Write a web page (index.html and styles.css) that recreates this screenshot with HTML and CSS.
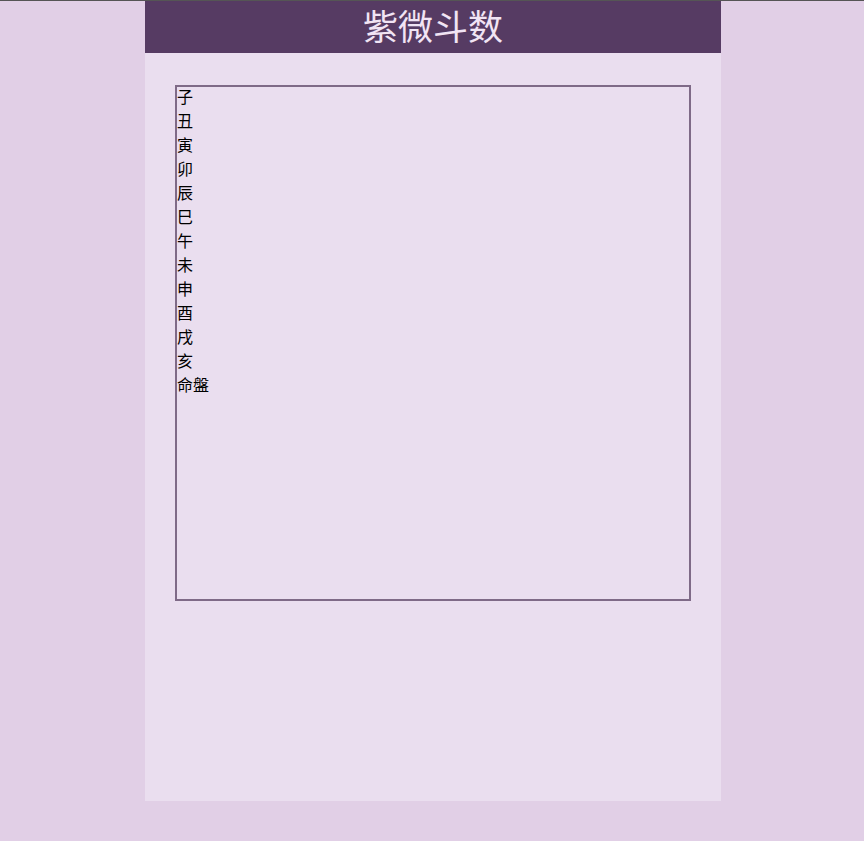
FILE: index.html
```html
<!DOCTYPE html>
<html lang="zh">
<head>
<meta charset="utf-8">
<title>紫微斗数</title>
<link rel="stylesheet" href="styles.css">
</head>
<body>
<div class="page">
  <h1 class="title">紫微斗数</h1>
  <div class="chart">
    <div class="cell">子</div>
    <div class="cell">丑</div>
    <div class="cell">寅</div>
    <div class="cell">卯</div>
    <div class="cell">辰</div>
    <div class="cell">巳</div>
    <div class="cell">午</div>
    <div class="cell">未</div>
    <div class="cell">申</div>
    <div class="cell">酉</div>
    <div class="cell">戌</div>
    <div class="cell">亥</div>
    <div class="cell">命盤</div>
  </div>
</div>
</body>
</html>
```

FILE: styles.css
```css
html, body {
  margin: 0;
  padding: 0;
}
body {
  background: #e1cfe6;
  border-top: 1px solid #555555;
  padding-left: 2px;
  font-family: "Noto Sans CJK SC", "Noto Sans CJK TC", sans-serif;
  color: #000000;
  font-size: 16px;
}
.page {
  width: 576px;
  height: 800px;
  margin: 0 auto;
  background: #eadeef;
  display: flow-root;
}
.title {
  margin: 0;
  height: 52px;
  background: #563b63;
  color: #f1e4f4;
  font-size: 35px;
  font-weight: normal;
  line-height: 48px;
  text-align: center;
}
.chart {
  width: 512px;
  height: 512px;
  margin: 32px 0 0 30px;
  border: 2px solid #7f6a87;
}
.cell {
  height: 24px;
  line-height: 18px;
}
```
